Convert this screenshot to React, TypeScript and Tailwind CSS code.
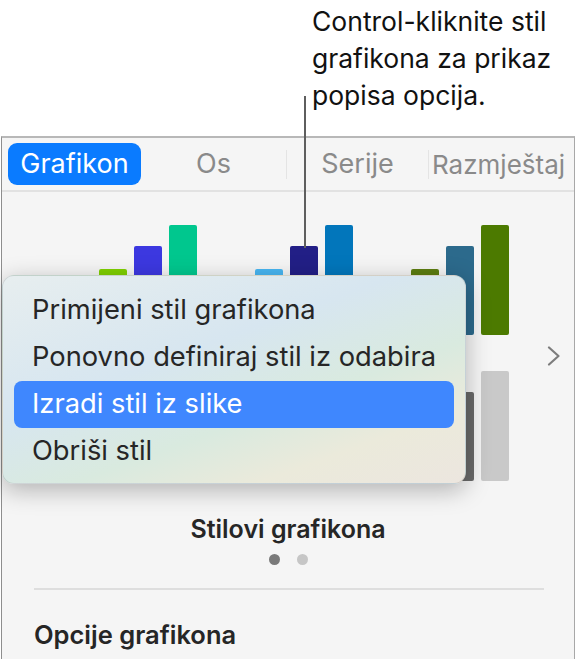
const bars = [
  [
    ["bg-[#7fd000]", "h-[66px]"],
    ["bg-[#3c38e0]", "h-[89px]"],
    ["bg-[#00c78e]", "h-[110px]"],
  ],
  [
    ["bg-[#48b6f2]", "h-[66px]"],
    ["bg-[#221f86]", "h-[89px]"],
    ["bg-[#0276bb]", "h-[110px]"],
  ],
  [
    ["bg-[#5c7d10]", "h-[66px]"],
    ["bg-[#2c6a8c]", "h-[89px]"],
    ["bg-[#4c7a00]", "h-[110px]"],
  ],
];

const bars2 = [
  [
    ["bg-[#f0b400]", "h-[66px]"],
    ["bg-[#e06c00]", "h-[89px]"],
    ["bg-[#d03030]", "h-[110px]"],
  ],
  [
    ["bg-[#9bd0f0]", "h-[66px]"],
    ["bg-[#5a9ad0]", "h-[89px]"],
    ["bg-[#2a5a9a]", "h-[110px]"],
  ],
  [
    ["bg-[#a8a8a8]", "h-[66px]"],
    ["bg-[#6a6a6a]", "h-[89px]"],
    ["bg-[#c9c9c9]", "h-[110px]"],
  ],
];

function Thumb({ set }: { set: string[][] }) {
  return (
    <div className="w-[156px] flex justify-center items-end gap-[7px] h-[120px]">
      {set.map(([c, h], i) => (
        <div key={i} className={`w-[28px] rounded-[2px] ${c} ${h}`} />
      ))}
    </div>
  );
}

const items = [
  "Primijeni stil grafikona",
  "Ponovno definiraj stil iz odabira",
  "Izradi stil iz slike",
  "Obriši stil",
];

export default function App() {
  return (
    <div className="relative w-[577px] h-[659px] overflow-hidden bg-white font-['Inter','Liberation_Sans',sans-serif]">
      {/* oblačić s uputom */}
      <div className="pl-[312px] pt-[3px] h-[136px] text-[26.5px] leading-[37px] text-[#111]">
        <p>Control-kliknite stil</p>
        <p>grafikona za prikaz</p>
        <p>popisa opcija.</p>
      </div>

      {/* panel */}
      <div className="ml-[1px] w-[574px] h-[523px] bg-[#f5f5f5] border-t-2 border-t-[#b8b8b8] border-l border-l-[#8e8e8e] border-r border-r-[#a8a8a8]">
        {/* kartice */}
        <div className="h-[54px] flex items-center border-b-2 border-[#e2e2e2] text-[27px]">
          <div className="ml-[6px] w-[133px] h-[42px] rounded-[9px] bg-[#0a7bff] text-white flex items-center justify-center">
            Grafikon
          </div>
          <div className="w-[145px] text-center text-[#8a8a8a]">Os</div>
          <div className="w-[1px] h-[29px] bg-[#e4e4e4]" />
          <div className="w-[141px] text-center text-[#8a8a8a]">Serije</div>
          <div className="w-[1px] h-[29px] bg-[#e4e4e4]" />
          <div className="pl-[3px] text-[26px] text-[#8a8a8a] whitespace-nowrap">Razmještaj</div>
        </div>

        {/* stilovi */}
        <div className="flex">
          <div className="ml-[68px] w-[468px] pt-[23px] flex flex-col gap-[26px]">
            <div className="flex">
              {bars.map((s, i) => (
                <Thumb key={i} set={s} />
              ))}
            </div>
            <div className="flex">
              {bars2.map((s, i) => (
                <Thumb key={i} set={s} />
              ))}
            </div>
          </div>
          <svg className="ml-[9px] mt-[154px]" width="14" height="20" viewBox="0 0 14 20" fill="none">
            <path d="M2 1.5 L11.5 10 L2 18.5" stroke="#7d7d7d" strokeWidth="2.2" strokeLinecap="round" strokeLinejoin="round" />
          </svg>
        </div>

        <div className="mt-[33px] text-center text-[25px] leading-[30px] font-semibold text-[#262626]">
          Stilovi grafikona
        </div>
        <div className="mt-[10px] flex justify-center gap-[17px]">
          <div className="w-[11px] h-[11px] rounded-full bg-[#7a7a7a]" />
          <div className="w-[11px] h-[11px] rounded-full bg-[#c6c6c6]" />
        </div>
        <div className="mt-[23px] ml-[32px] mr-[30px] h-[2px] bg-[#dedede]" />
        <div className="mt-[30px] pl-[32px] text-[25.5px] leading-[30px] font-semibold text-[#262626]">
          Opcije grafikona
        </div>
      </div>

      {/* linija oblačića */}
      <div className="absolute left-[304px] top-[96px] w-[2px] h-[152px] bg-[#5e5e5e]" />

      {/* kontekstni izbornik */}
      <div className="absolute left-[2px] top-[275px] w-[464px] h-[209px] rounded-[12px] border border-black/10 shadow-[0_6px_24px_rgba(0,0,0,0.28)] bg-[linear-gradient(160deg,#e7eeef_0%,#d7e6f0_38%,#d9eadf_62%,#ebeadb_80%,#ece6df_100%)] px-[11px] pt-[11px] text-[27.3px] text-[#262626]">
        {items.map((t, i) => (
          <div
            key={t}
            className={`h-[47px] flex items-center pl-[18px] rounded-[8px] whitespace-nowrap ${
              i === 2 ? "bg-[#3f87fe] text-white" : ""
            }`}
          >
            {t}
          </div>
        ))}
      </div>
    </div>
  );
}
